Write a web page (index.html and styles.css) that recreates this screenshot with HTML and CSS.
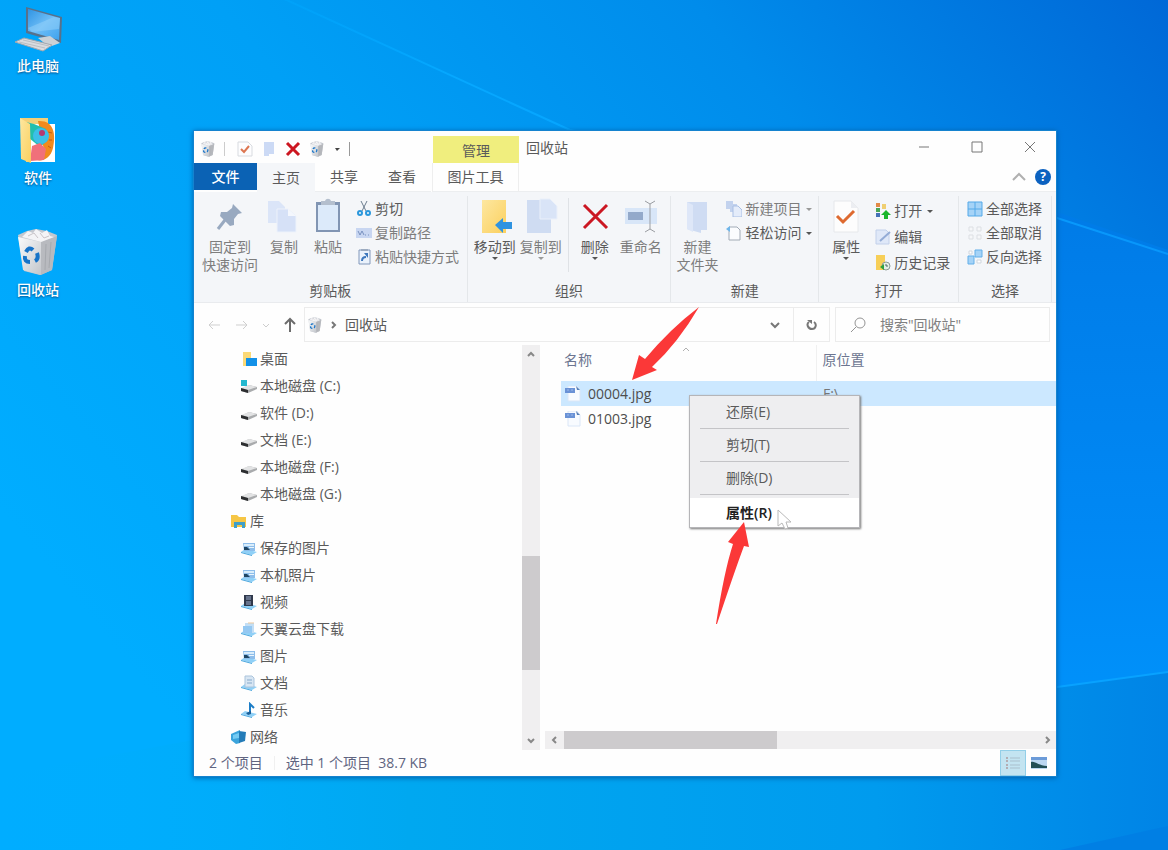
FILE: index.html
```html
<!DOCTYPE html>
<html lang="zh-CN">
<head>
<meta charset="utf-8">
<title>回收站</title>
<link rel="stylesheet" href="styles.css">
</head>
<body>
<svg class="defs" aria-hidden="true">
  <defs>
    <linearGradient id="paper" x1="0" y1="0" x2="1" y2="1"><stop offset="0" stop-color="#fafbfc"/><stop offset="1" stop-color="#c3c6cb"/></linearGradient>
    <linearGradient id="screen" x1="0" y1="0" x2="1" y2="1"><stop offset="0" stop-color="#2f94e4"/><stop offset=".5" stop-color="#6dbdf6"/><stop offset="1" stop-color="#3da2ee"/></linearGradient>
    <linearGradient id="gold" x1="0" y1="0" x2="1" y2="1"><stop offset="0" stop-color="#fde7a0"/><stop offset="1" stop-color="#fbd05e"/></linearGradient>
    <symbol id="bin" viewBox="0 0 48 48">
      <path d="M4 7 L13 3 L22 1 L33 3 L43 7 L38 42 L26 47 L10 43Z" fill="#c4c8cf"/>
      <path d="M4 9 L27 14 L27 47 L9 42Z" fill="url(#paper)"/>
      <path d="M27 14 L43 8 L38 42 L27 47Z" fill="#b8babf"/>
      <path d="M8 9 L14 3 L19 5 L22 1 L28 5 L33 2 L36 8 L40 9 L27 14Z" fill="#f4f4f6"/>
      <path d="M14 8 L20 5 L24 10 M26 5 L30 10 L35 8" fill="none" stroke="#c9c4c8"/>
      <path d="M32 16 L31 42 M37 14 L35 40" stroke="#a6a9ae"/>
      <g fill="none" stroke="#1673c8" stroke-width="4"><path d="M12 24 Q15 18 19 22"/><path d="M23 25 Q25 31 21 33"/><path d="M16 34 Q10 34 11 28"/></g>
    </symbol>
    <symbol id="drive" viewBox="0 0 16 16"><path d="M0 11 L8 7 L16 9 L16 11 L7 15 L0 13Z" fill="#a9abad"/><path d="M0 10 L8 7 L16 9 L7 12Z" fill="#e2e3e4"/><path d="M0 10 L7 12 L7 15 L0 13Z" fill="#2c2e30"/></symbol>
    <symbol id="stand" viewBox="0 0 16 16"><path d="M0 12 L4 9 L16 12 L11 15Z" fill="#8fd0f7"/><path d="M0 12 L11 15 L11 16 L0 13Z" fill="#4aa6dd"/></symbol>
    <symbol id="photo" viewBox="0 0 16 16"><use href="#stand"/><path d="M2 3 H14 V11 H3Z" fill="#8dbdea"/><path d="M3 4 H13 V6 H3Z" fill="#d9edfb"/><path d="M3 7 L6 7 L9 10 H3Z" fill="#1f4664"/><path d="M8 7 H13 V8 H8Z" fill="#eaf5fc"/></symbol>
    <symbol id="jpg" viewBox="0 0 16 16"><path d="M3 0 H12 L15 4 V15 H3Z" fill="#f8fbff" stroke="#dae6f7"/><path d="M0 2 H10 V7 H0Z" fill="#6a92d6"/><path d="M2 4 H4 M6 4 H8" stroke="#9db9e8"/><path d="M11 0 L15 4 H12Z" fill="#5780b8"/></symbol>
    <symbol id="page" viewBox="0 0 16 16"><path d="M1 1 H11 L15 5 V15 H1Z" fill="#fdfdfe" stroke="#d8dbe0"/></symbol>
    <symbol id="chev" viewBox="0 0 12 12"><path d="M3 5 L6 8 L9 5" fill="none" stroke="currentColor" stroke-width="2"/></symbol>
  </defs>
</svg>

<main class="desktop">
  <svg class="wallpaper" viewBox="0 0 1168 850" preserveAspectRatio="none" aria-hidden="true">
    <defs>
      <linearGradient id="w1" x1="0" y1=".6" x2="1" y2="0"><stop offset="0" stop-color="#00adff"/><stop offset=".4" stop-color="#00a0f6"/><stop offset=".7" stop-color="#008ceb"/><stop offset="1" stop-color="#0068d7"/></linearGradient>
      <linearGradient id="w2" x1="0" y1="0" x2="0" y2="1"><stop offset="0" stop-color="#0078e4"/><stop offset=".55" stop-color="#0088f4"/><stop offset="1" stop-color="#0099ff"/></linearGradient>
      <linearGradient id="w3" x1="0" y1="0" x2="1" y2="0"><stop offset="0" stop-color="#00b0fd" stop-opacity="0"/><stop offset=".35" stop-color="#00a8f0"/><stop offset=".75" stop-color="#009bee"/><stop offset="1" stop-color="#0084e6"/></linearGradient>
      <linearGradient id="ray" x1="0" y1="0" x2="1" y2="0"><stop offset="0" stop-color="#00a8ff" stop-opacity=".4"/><stop offset=".2" stop-color="#06a8ff"/><stop offset="1" stop-color="#0896fb"/></linearGradient>
    </defs>
    <rect width="1168" height="850" fill="url(#w1)"/>
    <path d="M560 130 L1057 212 L1168 250 V850 H560Z" fill="url(#w2)"/>
    <path d="M0 776 L193 740 L1057 687 L1168 672 V850 H0Z" fill="url(#w3)"/>
    <path d="M280 -3 L570 130 L1057 218 L1168 254" fill="none" stroke="url(#ray)" stroke-width="2"/>
    <path d="M1057 687 L1168 672" stroke="#08a2ff" stroke-width="2"/>
    <path d="M1060 850 L1168 826 V850Z" fill="#007fe4"/>
  </svg>

  <ul class="shortcuts">
    <li><button class="shortcut">
      <svg viewBox="0 0 48 48"><path d="M12 3 L48 13 L47 39 L12 29Z" fill="#58718b"/><path d="M14 5 L46 14 L45 36 L14 27Z" fill="url(#screen)"/><path d="M14 24 L40 13 L46 14 L45 25 L18 28Z" fill="#9bd4fb" opacity=".45"/><path d="M24 34 L36 32 L46 39 L35 43Z" fill="#ccd1d6"/><path d="M1 38 L10 34 L38 41 L29 47Z" fill="#d9dbdf" stroke="#a3a8ae"/><path d="M5 38 L31 44 M9 36 L35 42" stroke="#b9bec3"/></svg>
      <span>此电脑</span></button></li>
    <li><button class="shortcut">
      <svg viewBox="0 0 48 48"><path d="M6 2 H34 V10 H40 V46 H12Z" fill="#f3cf78"/><path d="M17 8 H41 V46 H17Z" fill="#fff"/><path d="M24 5 C40 4 42 18 39 32 C36 45 24 47 20 42 L30 34Z" fill="#f08a1e"/><path d="M34 16 L38 17 M35 24 L38 24 M34 30 L37 32" stroke="#c95b10"/><path d="M12 6 L20 8 L32 13 L34 24 L26 31 L15 22Z" fill="#22bfae"/><circle cx="27" cy="20" r="8" fill="#3cbfe8"/><circle cx="28" cy="17" r="3" fill="#b53a70"/><path d="M18 30 L26 27 L32 33 L30 44 L16 45Z" fill="#f0707a"/><path d="M6 2 L16 8 L17 47 L7 43Z" fill="url(#gold)"/></svg>
      <span>软件</span></button></li>
    <li><button class="shortcut"><svg viewBox="0 0 48 48"><use href="#bin"/></svg><span>回收站</span></button></li>
  </ul>

  <section class="window" aria-label="回收站">
    <header class="titlebar">
      <div class="quick">
        <svg class="i16"><use href="#bin"/></svg>
        <i class="bar"></i>
        <button aria-label="属性"><svg class="i16" viewBox="0 0 16 16"><use href="#page"/><path d="M4 8 L7 11 L12 5" fill="none" stroke="#dd7752" stroke-width="2"/></svg></button>
        <button aria-label="新建文件夹"><svg class="i16" viewBox="0 0 16 16"><path d="M3 1 H13 V13 H8 V15 H3Z" fill="#ccdaf5"/></svg></button>
        <button aria-label="删除"><svg class="i16" viewBox="0 0 16 16"><path d="M2 2 L14 14 M14 2 L2 14" stroke="#cc1620" stroke-width="3"/></svg></button>
        <button aria-label="清空"><svg class="i16"><use href="#bin"/></svg></button>
        <button aria-label="自定义"><svg class="i8" viewBox="0 0 8 8"><path d="M2 3 H7 L4 6Z" fill="#444"/></svg></button>
        <i class="bar dark"></i>
      </div>
      <div class="context">管理</div>
      <h1>回收站</h1>
      <div class="controls">
        <button aria-label="最小化"><svg viewBox="0 0 12 12"><path d="M1 6 H11"/></svg></button>
        <button aria-label="最大化"><svg viewBox="0 0 12 12"><path d="M1 1 H11 V11 H1Z"/></svg></button>
        <button aria-label="关闭"><svg viewBox="0 0 12 12"><path d="M1 1 L11 11 M11 1 L1 11"/></svg></button>
      </div>
    </header>

    <nav class="tabs">
      <button class="tab file">文件</button>
      <button class="tab active">主页</button>
      <button class="tab">共享</button>
      <button class="tab">查看</button>
      <button class="tab tools">图片工具</button>
      <div class="tabs-end">
        <button aria-label="折叠"><svg class="i16" viewBox="0 0 16 16"><path d="M2 11 L8 5 L14 11" fill="none" stroke="#b0b0b0" stroke-width="2"/></svg></button>
        <button class="help" aria-label="帮助">?</button>
      </div>
    </nav>

    <div class="ribbon">
      <section class="group clip">
        <div class="tools-row">
          <button class="big wide off"><svg viewBox="0 0 36 36"><path d="M21 6 L30 15 L26 16 L22 21 L22 27 L18 28 L8 18 L9 14 L15 14 L20 10Z" fill="#98a9c0"/><path d="M13 22 L6 31" stroke="#98a9c0" stroke-width="3"/></svg><span>固定到<br>快速访问</span></button>
          <button class="big off"><svg viewBox="0 0 36 36"><path d="M2 3 H13 L19 9 V25 H2Z" fill="#dbe5f8"/><path d="M11 11 H22 L30 18 V34 H11Z" fill="#d6e1f7" stroke="#edf2fb"/><path d="M22 11 V18 H30" fill="#f4f7fd"/></svg><span>复制</span></button>
          <button class="big off"><svg viewBox="0 0 36 36"><path d="M6 4 H30 V34 H6Z" fill="#8195b3"/><path d="M8 7 H28 V32 H8Z" fill="#dceafa"/><path d="M11 3 H15 C16 0 20 0 21 3 H25 V7 H11Z" fill="#b4bfce"/></svg><span>粘贴</span></button>
          <div class="small-list">
            <button class="small"><svg class="i16" viewBox="0 0 16 16"><path d="M5 0 L10 10 M11 0 L6 10" stroke="#6b7c8e"/><circle cx="4" cy="12" r="2" fill="none" stroke="#2a97dc" stroke-width="2"/><circle cx="12" cy="12" r="2" fill="none" stroke="#2a97dc" stroke-width="2"/></svg>剪切</button>
            <button class="small off"><svg class="i16" viewBox="0 0 16 16"><path d="M0 3 H16 V13 H0Z" fill="#c8d6f1"/><path d="M2 6 L4 10 L6 6 L8 10 M9 10 H10 M12 10 H13" fill="none" stroke="#7891bf"/></svg>复制路径</button>
            <button class="small off"><svg class="i16" viewBox="0 0 16 16"><path d="M3 1 H14 V15 H3Z" fill="#eaf2fc" stroke="#8298bb"/><path d="M5 0 H12 V2 H5Z" fill="#9cabc0"/><path d="M6 12 C6 9 7 8 10 8" fill="none" stroke="#3e78bd" stroke-width="2"/><path d="M8 4 H12 V9Z" fill="#3e78bd"/></svg>粘贴快捷方式</button>
          </div>
        </div>
        <h2>剪贴板</h2>
      </section>
      <section class="group org">
        <div class="tools-row">
          <button class="big mid"><svg viewBox="0 0 36 36"><path d="M5 2 H29 V35 H5Z" fill="url(#gold)"/><path d="M18 27 L26 20 V24 H35 V31 H26 V35Z" fill="#2f93e0"/></svg><span>移动到</span><i class="caret"></i></button>
          <button class="big mid off"><svg viewBox="0 0 36 36"><path d="M4 2 H28 V35 H4Z" fill="#cfdcf2"/><path d="M17 1 H27 L34 8 V21 H17Z" fill="#d9e4f7" stroke="#eaf0fa"/></svg><span>复制到</span><i class="caret"></i></button>
          <i class="split"></i>
          <button class="big"><svg viewBox="0 0 36 36"><path d="M7 7 L30 30 M30 7 L7 30" stroke="#cb1723" stroke-width="3"/></svg><span>删除</span><i class="caret"></i></button>
          <button class="big name off"><svg viewBox="0 0 36 36"><path d="M2 10 H34 V26 H2Z" fill="#d8e6f8"/><path d="M5 14 H20 V22 H5Z" fill="#93a9ca"/><path d="M22 3 L27 6 L32 3 M27 6 V31 M22 34 L27 31 L32 34" fill="none" stroke="#9a9da2" stroke-width="1"/></svg><span>重命名</span></button>
        </div>
        <h2>组织</h2>
      </section>
      <section class="group new">
        <div class="tools-row">
          <button class="big mid off"><svg viewBox="0 0 36 36"><path d="M8 4 H28 V32 H22 V35 L8 31Z" fill="#cfdcf3"/><path d="M8 4 L14 7 V34 L8 31Z" fill="#dee7f8"/></svg><span>新建<br>文件夹</span></button>
          <div class="small-list">
            <button class="small off"><svg class="i16" viewBox="0 0 16 16"><path d="M0 0 H7 V8 H0Z M4 3 H11 V11 H4Z" fill="#c2d2ee"/><path d="M7 5 H12 L16 9 V16 H7Z" fill="#e4ecfa" stroke="#a9bfe4"/></svg>新建项目<i class="caret"></i></button>
            <button class="small"><svg class="i16" viewBox="0 0 16 16"><path d="M3 2 H11 L14 5 V15 H3Z" fill="#fbfcfe" stroke="#a2abb6"/><path d="M0 4 L4 1 L4 7Z" fill="#6fb6ea"/></svg>轻松访问<i class="caret"></i></button>
          </div>
        </div>
        <h2>新建</h2>
      </section>
      <section class="group open">
        <div class="tools-row">
          <button class="big"><svg viewBox="0 0 36 36"><path d="M6 3 H23 L30 10 V34 H6Z" fill="#fdfdfd" stroke="#e6e8eb"/><path d="M23 3 V10 H30" fill="#eceef2"/><path d="M9 18 L15 24 L26 13" fill="none" stroke="#de6a30" stroke-width="3"/></svg><span>属性</span><i class="caret"></i></button>
          <div class="small-list loose">
            <button class="small"><svg class="i16" viewBox="0 0 16 16"><path d="M1 0 H5 V4 H1Z" fill="#e28a47"/><path d="M1 5 H5 V9 H1Z" fill="#4aa657"/><path d="M1 10 H5 V14 H1Z" fill="#4472b8"/><path d="M7 1 H11 V6 H7Z" fill="#efcf72"/><path d="M11 7 L16 12 H13 V16 H9 V12 H6Z" fill="#19b52c"/></svg>打开<i class="caret"></i></button>
            <button class="small"><svg class="i16" viewBox="0 0 16 16"><path d="M1 1 H11 L14 4 V15 H1Z" fill="#dfe8f8" stroke="#c2d0ea"/><path d="M5 12 L15 3" stroke="#94acd6" stroke-width="2"/></svg>编辑</button>
            <button class="small"><svg class="i16" viewBox="0 0 16 16"><path d="M1 0 H10 V15 H1Z" fill="#f7cf58"/><circle cx="11" cy="11" r="4" fill="#e4efe6" stroke="#8a9a94"/><path d="M5 12 L9 9 V15Z" fill="#2fa13c"/><path d="M11 9 V11 H13" fill="none" stroke="#4c6a60"/></svg>历史记录</button>
          </div>
        </div>
        <h2>打开</h2>
      </section>
      <section class="group pick">
        <div class="tools-row">
          <div class="small-list">
            <button class="small"><svg class="i16" viewBox="0 0 16 16"><path d="M1 1 H15 V15 H1Z M8 1 V15 M1 8 H15" fill="#a5d3f7" stroke="#55a9e8"/></svg>全部选择</button>
            <button class="small"><svg class="i16" viewBox="0 0 16 16"><path d="M2 2 H6 V6 H2Z M10 2 H14 V6 H10Z M2 10 H6 V14 H2Z M10 10 H14 V14 H10Z" fill="#f6f7f9" stroke="#dcdfe3"/></svg>全部取消</button>
            <button class="small"><svg class="i16" viewBox="0 0 16 16"><path d="M8 1 H15 V8 H8Z M1 7 H7 V15 H1Z" fill="#a5d3f7" stroke="#62afe9"/><path d="M2 2 H5 V5 H2Z M10 11 H14 V14 H10Z" fill="#fff" stroke="#cfd6de"/></svg>反向选择</button>
          </div>
        </div>
        <h2>选择</h2>
      </section>
    </div>

    <div class="address">
      <div class="moves">
        <button aria-label="后退"><svg class="i16" viewBox="0 0 16 16"><path d="M14 8 H3 M7 4 L3 8 L7 12" fill="none" stroke="#cfcfcf"/></svg></button>
        <button aria-label="前进"><svg class="i16" viewBox="0 0 16 16"><path d="M2 8 H13 M9 4 L13 8 L9 12" fill="none" stroke="#cfcfcf"/></svg></button>
        <button aria-label="最近位置"><svg class="i8" viewBox="0 0 8 8"><path d="M1 3 L4 6 L7 3" fill="none" stroke="#cdcdcd"/></svg></button>
        <button aria-label="上移"><svg class="i16" viewBox="0 0 16 16"><path d="M8 15 V2 M3 7 L8 2 L13 7" fill="none" stroke="#6c6c6c" stroke-width="2"/></svg></button>
      </div>
      <div class="path">
        <svg class="i16"><use href="#bin"/></svg>
        <svg class="i8" viewBox="0 0 8 8"><path d="M2 1 L5 4 L2 7" fill="none" stroke="#777" stroke-width="2"/></svg>
        <span>回收站</span>
        <button class="drop" aria-label="历史"><svg class="i16" viewBox="0 0 16 16"><path d="M4 6 L8 10 L12 6" fill="none" stroke="#777" stroke-width="2"/></svg></button>
        <button class="reload" aria-label="刷新"><svg class="i12" viewBox="0 0 12 12"><path d="M3 3 C0 5 2 10 6 10 C10 10 11 5 8 3" fill="none" stroke="#777" stroke-width="2"/><path d="M1 1 H6 V5Z" fill="#777"/></svg></button>
      </div>
      <label class="search"><svg class="i16" viewBox="0 0 16 16"><circle cx="10" cy="6" r="5" fill="none" stroke="#949494"/><path d="M6 10 L1 15" stroke="#949494"/></svg><input type="search" aria-label="搜索" placeholder='搜索"回收站"'></label>
    </div>

    <div class="body">
      <ul class="tree">
        <li class="sub"><svg class="i16" viewBox="0 0 16 16"><path d="M2 1 H10 V15 H2Z" fill="#fbd977"/><path d="M5 7 H16 V15 H5Z" fill="#1291e8"/></svg>桌面</li>
        <li class="sub"><svg class="i16" viewBox="0 0 16 16"><use href="#drive"/><path d="M0 2 H6 V8 H0Z" fill="#24b8cf"/></svg>本地磁盘 (C:)</li>
        <li class="sub"><svg class="i16"><use href="#drive"/></svg>软件 (D:)</li>
        <li class="sub"><svg class="i16"><use href="#drive"/></svg>文档 (E:)</li>
        <li class="sub"><svg class="i16"><use href="#drive"/></svg>本地磁盘 (F:)</li>
        <li class="sub"><svg class="i16"><use href="#drive"/></svg>本地磁盘 (G:)</li>
        <li><svg class="i16" viewBox="0 0 16 16"><path d="M0 2 H6 L8 4 H15 V14 H0Z" fill="#f6c645"/><path d="M3 9 H14 V15 H11 V12 H6 V15 H3Z" fill="#3f9fc9"/></svg>库</li>
        <li class="sub"><svg class="i16"><use href="#photo"/></svg>保存的图片</li>
        <li class="sub"><svg class="i16"><use href="#photo"/></svg>本机照片</li>
        <li class="sub"><svg class="i16" viewBox="0 0 16 16"><use href="#stand"/><path d="M3 1 H12 V12 H3Z" fill="#30394c"/><path d="M5 2 H10 V6 H5Z M5 7 H10 V11 H5Z" fill="#66738c"/></svg>视频</li>
        <li class="sub"><svg class="i16" viewBox="0 0 16 16"><use href="#stand"/><path d="M4 2 H13 V12 H4Z" fill="#c2def5"/><path d="M2 5 H11 V12 H2Z" fill="#94c8f2"/><path d="M7 2 H13" stroke="#ecc79c"/></svg>天翼云盘下载</li>
        <li class="sub"><svg class="i16"><use href="#photo"/></svg>图片</li>
        <li class="sub"><svg class="i16" viewBox="0 0 16 16"><use href="#stand"/><path d="M4 1 H11 L13 3 V12 H4Z" fill="#d8e6f3" stroke="#abc4dc"/><path d="M6 5 H11 M6 8 H11" stroke="#86a9cb"/></svg>文档</li>
        <li class="sub"><svg class="i16" viewBox="0 0 16 16"><use href="#stand"/><path d="M9 12 V2 L13 6" fill="none" stroke="#1d7ec7" stroke-width="2"/><path d="M5 11 L10 9 V12 L7 13Z" fill="#1b5d95"/></svg>音乐</li>
        <li><svg class="i16" viewBox="0 0 16 16"><path d="M0 5 L9 1 L9 14 L5 15 L0 11Z" fill="#3ba4dc"/><path d="M8 2 L15 3 L14 12 L8 14Z" fill="#247cb8"/><path d="M2 6 L8 4 V9 L2 10Z" fill="#75cbf3"/></svg>网络</li>
      </ul>
      <div class="vscroll">
        <button aria-label="向上"><svg class="i12 up"><use href="#chev"/></svg></button>
        <div class="vtrack"><div class="vthumb"></div></div>
        <button aria-label="向下"><svg class="i12"><use href="#chev"/></svg></button>
      </div>
      <div class="content">
        <table class="files">
          <colgroup><col class="c-name"><col></colgroup>
          <thead><tr><th>名称<svg class="sort" viewBox="0 0 8 8"><path d="M1 6 L4 3 L7 6" fill="none" stroke="#b0b0b0"/></svg></th><th>原位置</th></tr></thead>
          <tbody>
            <tr class="selected"><td><svg class="i16"><use href="#jpg"/></svg>00004.jpg</td><td>F:\</td></tr>
            <tr><td><svg class="i16"><use href="#jpg"/></svg>01003.jpg</td><td></td></tr>
          </tbody>
        </table>
        <div class="hscroll">
          <button aria-label="向左"><svg class="i12 left"><use href="#chev"/></svg></button>
          <div class="htrack"><div class="hthumb"></div></div>
          <button aria-label="向右"><svg class="i12 right"><use href="#chev"/></svg></button>
        </div>
      </div>
    </div>

    <footer class="status">
      <span>2 个项目</span><i class="bar"></i><span>选中 1 个项目&nbsp; 38.7 KB</span>
      <div class="views">
        <button class="on" aria-label="详细信息"><svg class="i16" viewBox="0 0 16 16"><path d="M1 3 H3 M1 6 H3 M1 10 H3 M1 13 H3" stroke="#b3adb3" stroke-width="2"/><path d="M5 3 H15 M5 6 H15 M5 10 H15 M5 13 H15" stroke="#a9bfcc"/></svg></button>
        <button aria-label="大图标"><svg class="i16" viewBox="0 0 16 16"><path d="M0 2 H16 V14 H0Z" fill="#bcd7f1"/><path d="M0 2 H16 V5 H0Z" fill="#6b9bd8"/><path d="M0 7 C4 6 6 10 16 11 V13 H0Z" fill="#234f55"/></svg></button>
      </div>
    </footer>
  </section>

  <menu class="popup">
    <li><button>还原(E)</button></li>
    <li><button>剪切(T)</button></li>
    <li><button>删除(D)</button></li>
    <li class="hot"><button>属性(R)</button></li>
  </menu>
  <svg class="pointer" viewBox="0 0 16 22" aria-hidden="true"><path d="M1 1 L1 17 L5 14 L8 20 L11 19 L9 13 L14 13Z" fill="#fff" stroke="#b9b9b9"/></svg>
  <svg class="arrow first" viewBox="0 0 68 74" aria-hidden="true"><path d="M0 73 L7 48 L13 52 Q38 22 67 0 Q46 36 20 60 L25 63Z" fill="#fb3838"/></svg>
  <svg class="arrow second" viewBox="0 0 34 102" aria-hidden="true"><path d="M28 0 L33 25 L28 24 Q19 48 1 102 H0 Q8 50 17 22 L12 20Z" fill="#fb3838"/></svg>
</main>
</body>
</html>
```

FILE: styles.css
```css
* { box-sizing: border-box; }
body {
  margin: 0;
  font-family: "Open Sans", "Noto Sans CJK SC", sans-serif;
  font-size: 14px;
  line-height: 18px;
  color: #5a5a5a;
}
button {
  margin: 0;
  padding: 0;
  border: 0;
  background: none;
  font: inherit;
  color: inherit;
}
ul, menu { margin: 0; padding: 0; list-style: none; }
svg { display: block; flex: none; }
.defs { position: absolute; width: 0; height: 0; }
.i16 { width: 16px; height: 16px; }
.i12 { width: 12px; height: 12px; }
.i8 { width: 8px; height: 8px; }

.desktop {
  position: relative;
  min-height: 100vh;
  overflow: hidden;
  background: #00a3f8;
}
.wallpaper { position: absolute; inset: 0; width: 100%; height: 100%; }

.shortcuts {
  position: relative;
  display: flex;
  flex-direction: column;
  gap: 40px;
  width: 76px;
  padding-top: 4px;
}
.shortcut {
  display: flex;
  flex-direction: column;
  align-items: center;
  gap: 4px;
  width: 100%;
  color: #fff;
  font-weight: 500;
  line-height: 20px;
  text-shadow: 0 1px 2px #06508c;
}
.shortcut svg { width: 48px; height: 48px; }

.window {
  position: absolute;
  left: 193px;
  right: 111px;
  top: 130px;
  display: flex;
  flex-direction: column;
  border: 1px solid #1583cf;
  background: #fefefe;
  box-shadow: 0 1px 5px #0060a8;
}

.titlebar { display: flex; height: 32px; }
.quick {
  display: flex;
  align-items: center;
  gap: 8px;
  width: 239px;
  padding: 4px 0 0 6px;
}
.bar { width: 1px; height: 14px; background: #ccc; }
.quick .bar { margin-right: 4px; }
.quick .bar.dark { margin: 0; background: #999; }
.context {
  width: 86px;
  margin-top: 5px;
  padding-top: 6px;
  background: #f0ee7e;
  text-align: center;
}
.titlebar h1 {
  margin: 0;
  padding: 8px 7px;
  font-size: 14px;
  font-weight: 400;
}
.controls { display: flex; margin-left: auto; }
.controls button { display: grid; place-items: center; width: 53px; }
.controls svg { width: 12px; height: 12px; fill: none; stroke: #777; }

.tabs { display: flex; height: 29px; }
.tab { width: 58px; border-bottom: 1px solid #eceef0; }
.tab.file { width: 63px; margin-bottom: 2px; border: 0; background: #0b62b4; color: #fff; font-weight: 500; }
.tab.active { border: 0; background: #f4f6f9; }
.tab.tools { width: 87px; margin-left: 1px; border-left: 1px solid #eee; border-right: 1px solid #eee; }
.tabs-end {
  display: flex;
  flex: 1;
  align-items: center;
  justify-content: flex-end;
  gap: 8px;
  padding-right: 5px;
  border-bottom: 1px solid #eceef0;
}
.help {
  width: 16px;
  height: 16px;
  border-radius: 50%;
  background: #0c62c0;
  color: #fff;
  font-size: 12px;
  font-weight: 700;
  line-height: 16px;
}

.ribbon {
  display: grid;
  grid-template-columns: 274fr 204fr 148fr 140fr 93fr;
  padding-right: 4px;
  border-bottom: 1px solid #e9ebee;
  background: #f4f6f9;
}
.group {
  display: flex;
  flex-direction: column;
  margin-top: 4px;
  border-right: 1px solid #e4e7ea;
}
.group h2 {
  margin: 0;
  padding-bottom: 2px;
  font-size: 14px;
  font-weight: 400;
  text-align: center;
}
.tools-row { display: flex; align-items: flex-start; height: 86px; padding-top: 2px; }
.clip .tools-row { gap: 8px; padding-left: 8px; }
.org .tools-row { gap: 4px; padding-left: 6px; }
.new .tools-row { gap: 6px; padding-left: 5px; }
.open .tools-row { gap: 9px; padding-left: 9px; }
.pick .tools-row { padding-left: 6px; }
.big {
  position: relative;
  display: flex;
  flex-direction: column;
  align-items: center;
  gap: 4px;
  width: 36px;
  white-space: nowrap;
}
.big svg { width: 36px; height: 36px; }
.big.mid { width: 42px; }
.big.name { width: 48px; }
.big.wide { width: 56px; }
.big .caret { position: absolute; bottom: -4px; }
.caret {
  width: 0;
  height: 0;
  border: 3px solid transparent;
  border-bottom: 0;
  border-top-color: #555;
}
.off { color: #7d7d7d; }
.off .caret { border-top-color: #999; }
.split { width: 1px; height: 74px; margin: 0 4px 0 2px; background: #dfe2e6; }
.small-list { display: flex; flex-direction: column; gap: 6px; margin-left: 2px; padding-top: 2px; }
.loose { gap: 8px; padding-top: 4px; }
.small { display: flex; align-items: center; gap: 3px; white-space: nowrap; }
.small .caret { margin-left: 2px; }

.address { display: flex; padding: 4px 6px 3px 12px; }
.moves { display: flex; align-items: center; gap: 12px; width: 98px; }
.path {
  display: flex;
  flex: 1;
  align-items: center;
  gap: 7px;
  height: 35px;
  padding-left: 2px;
  border: 1px solid #ececec;
}
.drop { display: grid; place-items: center; width: 36px; height: 100%; margin-left: auto; }
.reload {
  display: grid;
  place-items: center;
  width: 36px;
  height: 100%;
  margin-left: -7px;
  border-left: 1px solid #ececec;
}
.search {
  display: flex;
  flex: none;
  width: 215px;
  align-items: center;
  gap: 14px;
  margin-left: 5px;
  padding-left: 14px;
  border: 1px solid #ececec;
}
.search input {
  flex: 1;
  min-width: 0;
  padding: 0;
  border: 0;
  outline: 0;
  background: none;
  font: inherit;
}
.search input::placeholder { color: #808080; opacity: 1; }

.body { display: flex; }
.tree { flex: none; width: 328px; }
.tree li {
  display: flex;
  align-items: center;
  gap: 3px;
  height: 27px;
  padding-left: 37px;
}
.tree .sub { padding-left: 47px; }
.vscroll {
  display: flex;
  flex-direction: column;
  width: 18px;
  background: #f0eff0;
  color: #888;
}
.vscroll button { display: grid; place-items: center; height: 20px; }
.vtrack { display: flex; flex: 1; flex-direction: column; }
.vtrack::before { content: ""; flex: 191; }
.vtrack::after { content: ""; flex: 60; }
.vthumb { flex: 114; background: #cdcbcd; }
.up { transform: rotate(180deg); }
.left { transform: rotate(90deg); }
.right { transform: rotate(-90deg); }

.content {
  display: flex;
  flex: 1;
  flex-direction: column;
  justify-content: space-between;
  min-width: 0;
}
.files { margin-left: 21px; border-collapse: collapse; table-layout: fixed; }
.c-name { width: 255px; }
.files th {
  position: relative;
  height: 36px;
  padding: 0 0 7px 3px;
  border-right: 1px solid #f0f0f0;
  color: #6c7590;
  font-weight: 400;
  text-align: left;
}
.sort { position: absolute; left: 121px; top: 0; width: 8px; height: 8px; }
.files th + th { padding-left: 6px; border: 0; }
.files td { height: 25px; padding: 0 0 0 7px; color: #777; }
.files td:first-child { display: flex; align-items: center; gap: 7px; padding-left: 4px; color: #4d4d4d; }
.selected { background: #cce8ff; }
.hscroll { display: flex; height: 18px; margin-left: 5px; margin-bottom: 1px; background: #f0eff0; color: #888; }
.hscroll button { display: grid; place-items: center; width: 19px; }
.htrack { flex: 1; }
.hthumb { width: 45%; height: 100%; background: #cdcbcd; }

.status {
  display: flex;
  align-items: center;
  gap: 11px;
  height: 26px;
  padding: 0 4px 0 15px;
  color: #5f6480;
}
.status .bar { background: #f0f0f0; }
.views { display: flex; height: 100%; margin-left: auto; }
.views button { display: grid; place-items: center; width: 26px; }
.views .on { border: 1px solid #93cfe8; background: #c3e4f1; }

.popup {
  position: absolute;
  left: 689px;
  top: 395px;
  width: 171px;
  border: 1px solid #b5b5b8;
  background: #eeeef0;
  box-shadow: 1px 1px 2px #777;
}
.popup li { padding: 0 10px; }
.popup button {
  width: 100%;
  height: 33px;
  padding-left: 26px;
  border-bottom: 1px solid #c4c4c7;
  text-align: left;
}
.popup .hot { margin-top: 3px; background: #fff; color: #222; font-weight: 600; }
.popup .hot button { height: 29px; border: 0; }

.pointer { position: absolute; left: 777px; top: 509px; width: 16px; height: 22px; }
.arrow { position: absolute; }
.first { left: 632px; top: 307px; width: 68px; height: 74px; }
.second { left: 716px; top: 522px; width: 34px; height: 102px; }
```
